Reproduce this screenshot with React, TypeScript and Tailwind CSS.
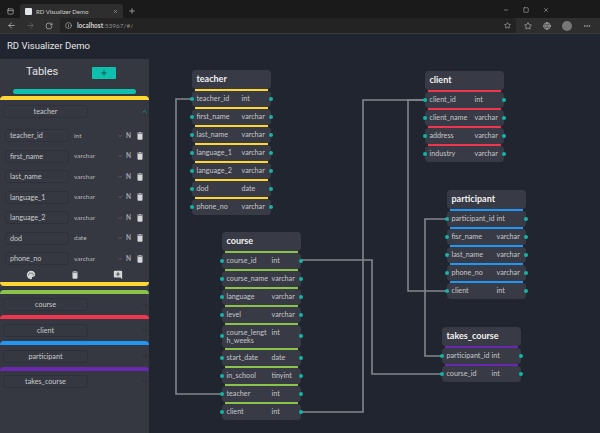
import React from 'react';
import { ArrowLeft, ArrowRight, ChevronDown, Info, Minus, MoreHorizontal, Plus, RotateCw, Square, Star, X, PanelTop, Globe } from 'lucide-react';
import { MdAddComment, MdDelete, MdPalette } from 'react-icons/md';

interface Column {
  name: string;
  type: string;
  tall?: boolean;
}

interface TableData {
  name: string;
  color: string;
  x: string;
  columns: Column[];
}

const teacherColumns: Column[] = [
  { name: 'teacher_id', type: 'int' },
  { name: 'first_name', type: 'varchar' },
  { name: 'last_name', type: 'varchar' },
  { name: 'language_1', type: 'varchar' },
  { name: 'language_2', type: 'varchar' },
  { name: 'dod', type: 'date' },
  { name: 'phone_no', type: 'varchar' }
];

const tables: TableData[] = [
  { name: 'teacher', color: 'bg-[#fdd835]', x: 'left-[192px] top-[70px]', columns: teacherColumns },
  {
    name: 'course',
    color: 'bg-[#8bc34a]',
    x: 'left-[222px] top-[232px]',
    columns: [
      { name: 'course_id', type: 'int' },
      { name: 'course_name', type: 'varchar' },
      { name: 'language', type: 'varchar' },
      { name: 'level', type: 'varchar' },
      { name: 'course_lengt\nh_weeks', type: 'int', tall: true },
      { name: 'start_date', type: 'date' },
      { name: 'in_school', type: 'tinyint' },
      { name: 'teacher', type: 'int' },
      { name: 'client', type: 'int' }
    ]
  },
  {
    name: 'client',
    color: 'bg-[#f0364f]',
    x: 'left-[425px] top-[71px]',
    columns: [
      { name: 'client_id', type: 'int' },
      { name: 'client_name', type: 'varchar' },
      { name: 'address', type: 'varchar' },
      { name: 'industry', type: 'varchar' }
    ]
  },
  {
    name: 'participant',
    color: 'bg-[#2196f3]',
    x: 'left-[447px] top-[190px]',
    columns: [
      { name: 'participant_id', type: 'int' },
      { name: 'fisr_name', type: 'varchar' },
      { name: 'last_name', type: 'varchar' },
      { name: 'phone_no', type: 'varchar' },
      { name: 'client', type: 'int' }
    ]
  },
  {
    name: 'takes_course',
    color: 'bg-[#6a27b0]',
    x: 'left-[442px] top-[327px]',
    columns: [
      { name: 'participant_id', type: 'int' },
      { name: 'course_id', type: 'int' }
    ]
  }
];

const links = [
  '192,99 176,99 176,394 222,394',
  '300,260 372,260 372,374 442,374',
  '300,412 363,412 363,100 425,100',
  '425,100 408,100 408,291 447,291',
  '447,219 425,219 425,356 442,356'
];

const TableNode: React.FC<{ table: TableData }> = ({ table }) => (
  <div className={`absolute w-[78.5px] ${table.x}`}>
    <div className="h-[18.5px] rounded-[4px] bg-[#383b45] pl-[4.5px] text-[9px] leading-[18px] font-bold text-[#f2f2f2]">
      {table.name}
    </div>
    {table.columns.map((col) => (
      <div key={col.name}>
        <div className={`mx-[3px] h-[2px] ${table.color}`} />
        <div className={`relative flex rounded-[4px] bg-[#383b45] pl-[4.5px] text-[7.2px] text-[#c4c6ca] ${col.tall ? 'h-[23px] leading-[8px] pt-[4px]' : 'h-[16px] leading-[15px]'}`}>
          <span className="w-[45px] shrink-0 whitespace-pre-line">{col.name}</span>
          <span>{col.type}</span>
          <span className="absolute left-[-2px] top-1/2 mt-[-2px] size-[4px] rounded-full bg-[#12b5a5]" />
          <span className="absolute right-[-2px] top-1/2 mt-[-2px] size-[4px] rounded-full bg-[#12b5a5]" />
        </div>
      </div>
    ))}
  </div>
);

const CollapsedTable: React.FC<{ name: string; color: string }> = ({ name, color }) => (
  <div>
    <div className={`h-[4px] rounded-t-[4px] ${color}`} />
    <div className="flex h-[21.7px] items-center pl-[3px] pt-[1px]">
      <div className="h-[13px] w-[85px] rounded-[3px] border border-[#2e3139] text-center text-[7.2px] leading-[11px] text-[#c8cacd]">
        {name}
      </div>
      <ChevronDown className="ml-[53px] h-[7px] w-[7px] text-[#22252c]" />
    </div>
  </div>
);

export default function App() {
  return (
    <div className="relative h-[433px] w-[600px] overflow-hidden bg-[#21252f] font-['Lato','Noto_Sans',sans-serif]">
      {/* browser chrome */}
      <div className="flex h-[18px] items-end bg-[#1b1a1a] text-[#c9c9c9]">
        <PanelTop className="mb-[3px] ml-[7px] h-[7px] w-[7px]" />
        <div className="ml-[6px] flex h-[14px] w-[103px] items-center rounded-t-[3px] bg-[#2e2e2e] px-[5px]">
          <span className="h-[7px] w-[7px] rounded-[1px] bg-[#dfe7ea]" />
          <span className="ml-[4px] flex-1 text-[6px] text-[#cfcfcf]">RD Visualizer Demo</span>
          <X className="h-[5px] w-[5px]" />
        </div>
        <Plus className="mb-[3px] ml-[5px] h-[8px] w-[8px]" />
        <Minus className="mb-[5px] ml-[367px] h-[6px] w-[6px]" />
        <Square className="mb-[5px] ml-[14px] h-[6px] w-[6px]" />
        <X className="mb-[5px] ml-[14px] h-[6px] w-[6px]" />
      </div>
      <div className="flex h-[16px] items-center border-b border-[#3a3a3a] bg-[#2e2e2e] text-[#bdbdbd]">
        <ArrowLeft className="ml-[7px] h-[9px] w-[9px]" />
        <ArrowRight className="ml-[10px] h-[9px] w-[9px] text-[#666]" />
        <RotateCw className="ml-[10px] h-[8px] w-[8px]" />
        <div className="ml-[7px] flex h-[15px] w-[456px] items-center bg-[#232323] pl-[5px]">
          <Info className="h-[7px] w-[7px]" />
          <span className="ml-[5px] text-[6.5px] font-bold text-[#d4d4d4]">localhost</span>
          <span className="text-[6.5px] text-[#8c8c8c]">:53967/#/</span>
          <Star className="ml-auto mr-[5px] h-[7px] w-[7px]" />
        </div>
        <Star className="ml-[8px] h-[8px] w-[8px]" />
        <Globe className="ml-[11px] h-[8px] w-[8px]" />
        <span className="ml-[11px] h-[10px] w-[10px] rounded-full bg-[#777]" />
        <MoreHorizontal className="ml-[11px] h-[8px] w-[8px]" />
      </div>

      {/* app bar */}
      <div className="flex h-[25px] items-center pl-[7px] font-['Roboto',sans-serif] text-[9.5px] text-[#e4e5e7]">RD Visualizer Demo</div>

      <div className="flex h-[374px]">
        {/* sidebar */}
        <aside className="w-[149px] shrink-0 bg-[#353841]">
          <div className="flex h-[30px] items-center pb-[3px]">
            <span className="ml-[26px] w-[38px] font-['Roboto',sans-serif] text-[11px] text-[#e2e3e5]">Tables</span>
            <button className="ml-[28px] flex h-[12px] w-[24px] items-center justify-center rounded-[1px] bg-[#0fbfae] text-[#17322f]">
              <Plus className="h-[8px] w-[8px]" />
            </button>
          </div>
          <div className="mx-[13px] h-[5px] rounded-full bg-[#0fbfae]" />
          <div className="mt-[2px] h-[4px] rounded-t-[4px] bg-[#fdd835]" />
          <div className="flex h-[22px] items-center pl-[3px] pt-[1px]">
            <div className="h-[13px] w-[85px] rounded-[3px] border border-[#2e3139] text-center text-[7.2px] leading-[11px] text-[#c8cacd]">teacher</div>
            <ChevronDown className="ml-[53px] h-[7px] w-[7px] rotate-180 text-[#0fbfae]" />
          </div>
          <div className="flex flex-col pt-[3.5px]">
            {teacherColumns.map((col) => (
              <div key={col.name} className="flex h-[20.5px] items-center pl-[5px] text-[#c8cacd]">
                <div className="h-[13px] w-[64px] rounded-[3px] border border-[#2e3139] pl-[4px] text-[7.2px] leading-[11px]">{col.name}</div>
                <span className="ml-[5px] w-[42.5px] text-[6.5px] text-[#b5b7bb]">{col.type}</span>
                <ChevronDown className="h-[6px] w-[6px] text-[#7a7d85]" />
                <span className="ml-[3.5px] w-[5px] text-[6.5px] font-bold text-[#a9abb0]">N</span>
                <MdDelete className="ml-[4px] h-[10px] w-[10px] text-[#d6d7da]" />
              </div>
            ))}
          </div>
          <div className="flex h-[12.5px] items-center text-[#d6d7da]">
            <MdPalette className="ml-[26px] h-[10px] w-[10px]" />
            <MdDelete className="ml-[34px] h-[10px] w-[10px]" />
            <MdAddComment className="ml-[33px] h-[10px] w-[10px]" />
          </div>
          <div className="h-[4px] rounded-b-[4px] bg-[#fdd835]" />
          <div className="h-[4px]" />
          <CollapsedTable name="course" color="bg-[#8bc34a]" />
          <CollapsedTable name="client" color="bg-[#f0364f]" />
          <CollapsedTable name="participant" color="bg-[#2196f3]" />
          <CollapsedTable name="takes_course" color="bg-[#6a27b0]" />
        </aside>
        <div className="flex-1" />
      </div>

      {/* canvas */}
      <svg className="absolute left-0 top-0" width="600" height="433" fill="none">
        {links.map((points) => (
          <polyline key={points} points={points} stroke="#83868d" strokeWidth="1.6" />
        ))}
      </svg>
      {tables.map((table) => (
        <TableNode key={table.name} table={table} />
      ))}
    </div>
  );
}
